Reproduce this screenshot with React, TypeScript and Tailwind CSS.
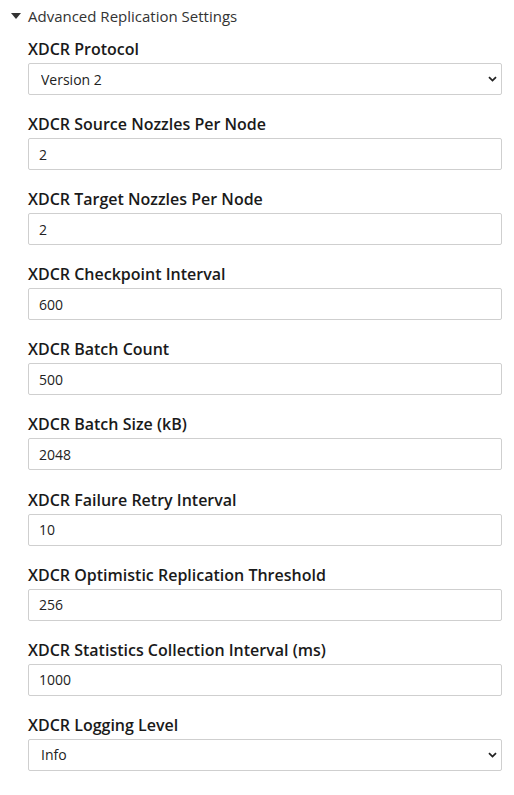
import React from "react";

const fields: { label: string; value: string; select?: boolean }[] = [
  { label: "XDCR Protocol", value: "Version 2", select: true },
  { label: "XDCR Source Nozzles Per Node", value: "2" },
  { label: "XDCR Target Nozzles Per Node", value: "2" },
  { label: "XDCR Checkpoint Interval", value: "600" },
  { label: "XDCR Batch Count", value: "500" },
  { label: "XDCR Batch Size (kB)", value: "2048" },
  { label: "XDCR Failure Retry Interval", value: "10" },
  { label: "XDCR Optimistic Replication Threshold", value: "256" },
  { label: "XDCR Statistics Collection Interval (ms)", value: "1000" },
  { label: "XDCR Logging Level", value: "Info", select: true },
];

function Chevron() {
  return (
    <svg
      className="pointer-events-none absolute right-[5px] top-1/2 -translate-y-1/2"
      width="9"
      height="6"
      viewBox="0 0 9 6"
    >
      <path d="M1 1.2 L4.5 4.6 L8 1.2" fill="none" stroke="#222" strokeWidth="1.8" />
    </svg>
  );
}

export default function App() {
  return (
    <div
      className="w-[514px] min-h-[795px] bg-white text-[#1a1a1a]"
      style={{ fontFamily: '"Open Sans", "Noto Sans", sans-serif' }}
    >
      <div className="flex h-[32px] items-center">
        <div className="flex w-[28px] justify-center pl-[4px]">
          <svg width="10" height="6" viewBox="0 0 10 6">
            <path d="M0 0 L10 0 L5 6 Z" fill="#333" />
          </svg>
        </div>
        <span className="text-[15px] leading-[24px] text-[#333]">Advanced Replication Settings</span>
      </div>
      <div className="flex flex-col pl-[28px] pr-[12px] pt-[5px]">
        {fields.map((f) => (
          <div key={f.label} className="mb-[17.1px] flex flex-col">
            <label className="mb-[2px] text-[16px] font-semibold leading-[24px] text-[#1a1a1a]">
              {f.label}
            </label>
            {f.select ? (
              <div className="relative">
                <select
                  defaultValue={f.value}
                  className="h-[32px] w-full appearance-none rounded-[2px] border border-[#cfcfcf] bg-white pl-[12px] text-[14px] text-[#222] outline-none"
                  style={{ fontFamily: '"Open Sans", sans-serif' }}
                >
                  <option>{f.value}</option>
                </select>
                <Chevron />
              </div>
            ) : (
              <input
                readOnly
                value={f.value}
                className="h-[32px] w-full rounded-[2px] border border-[#cfcfcf] bg-white pl-[10px] text-[14px] text-[#222] outline-none"
                style={{ fontFamily: '"Open Sans", sans-serif' }}
              />
            )}
          </div>
        ))}
      </div>
    </div>
  );
}
